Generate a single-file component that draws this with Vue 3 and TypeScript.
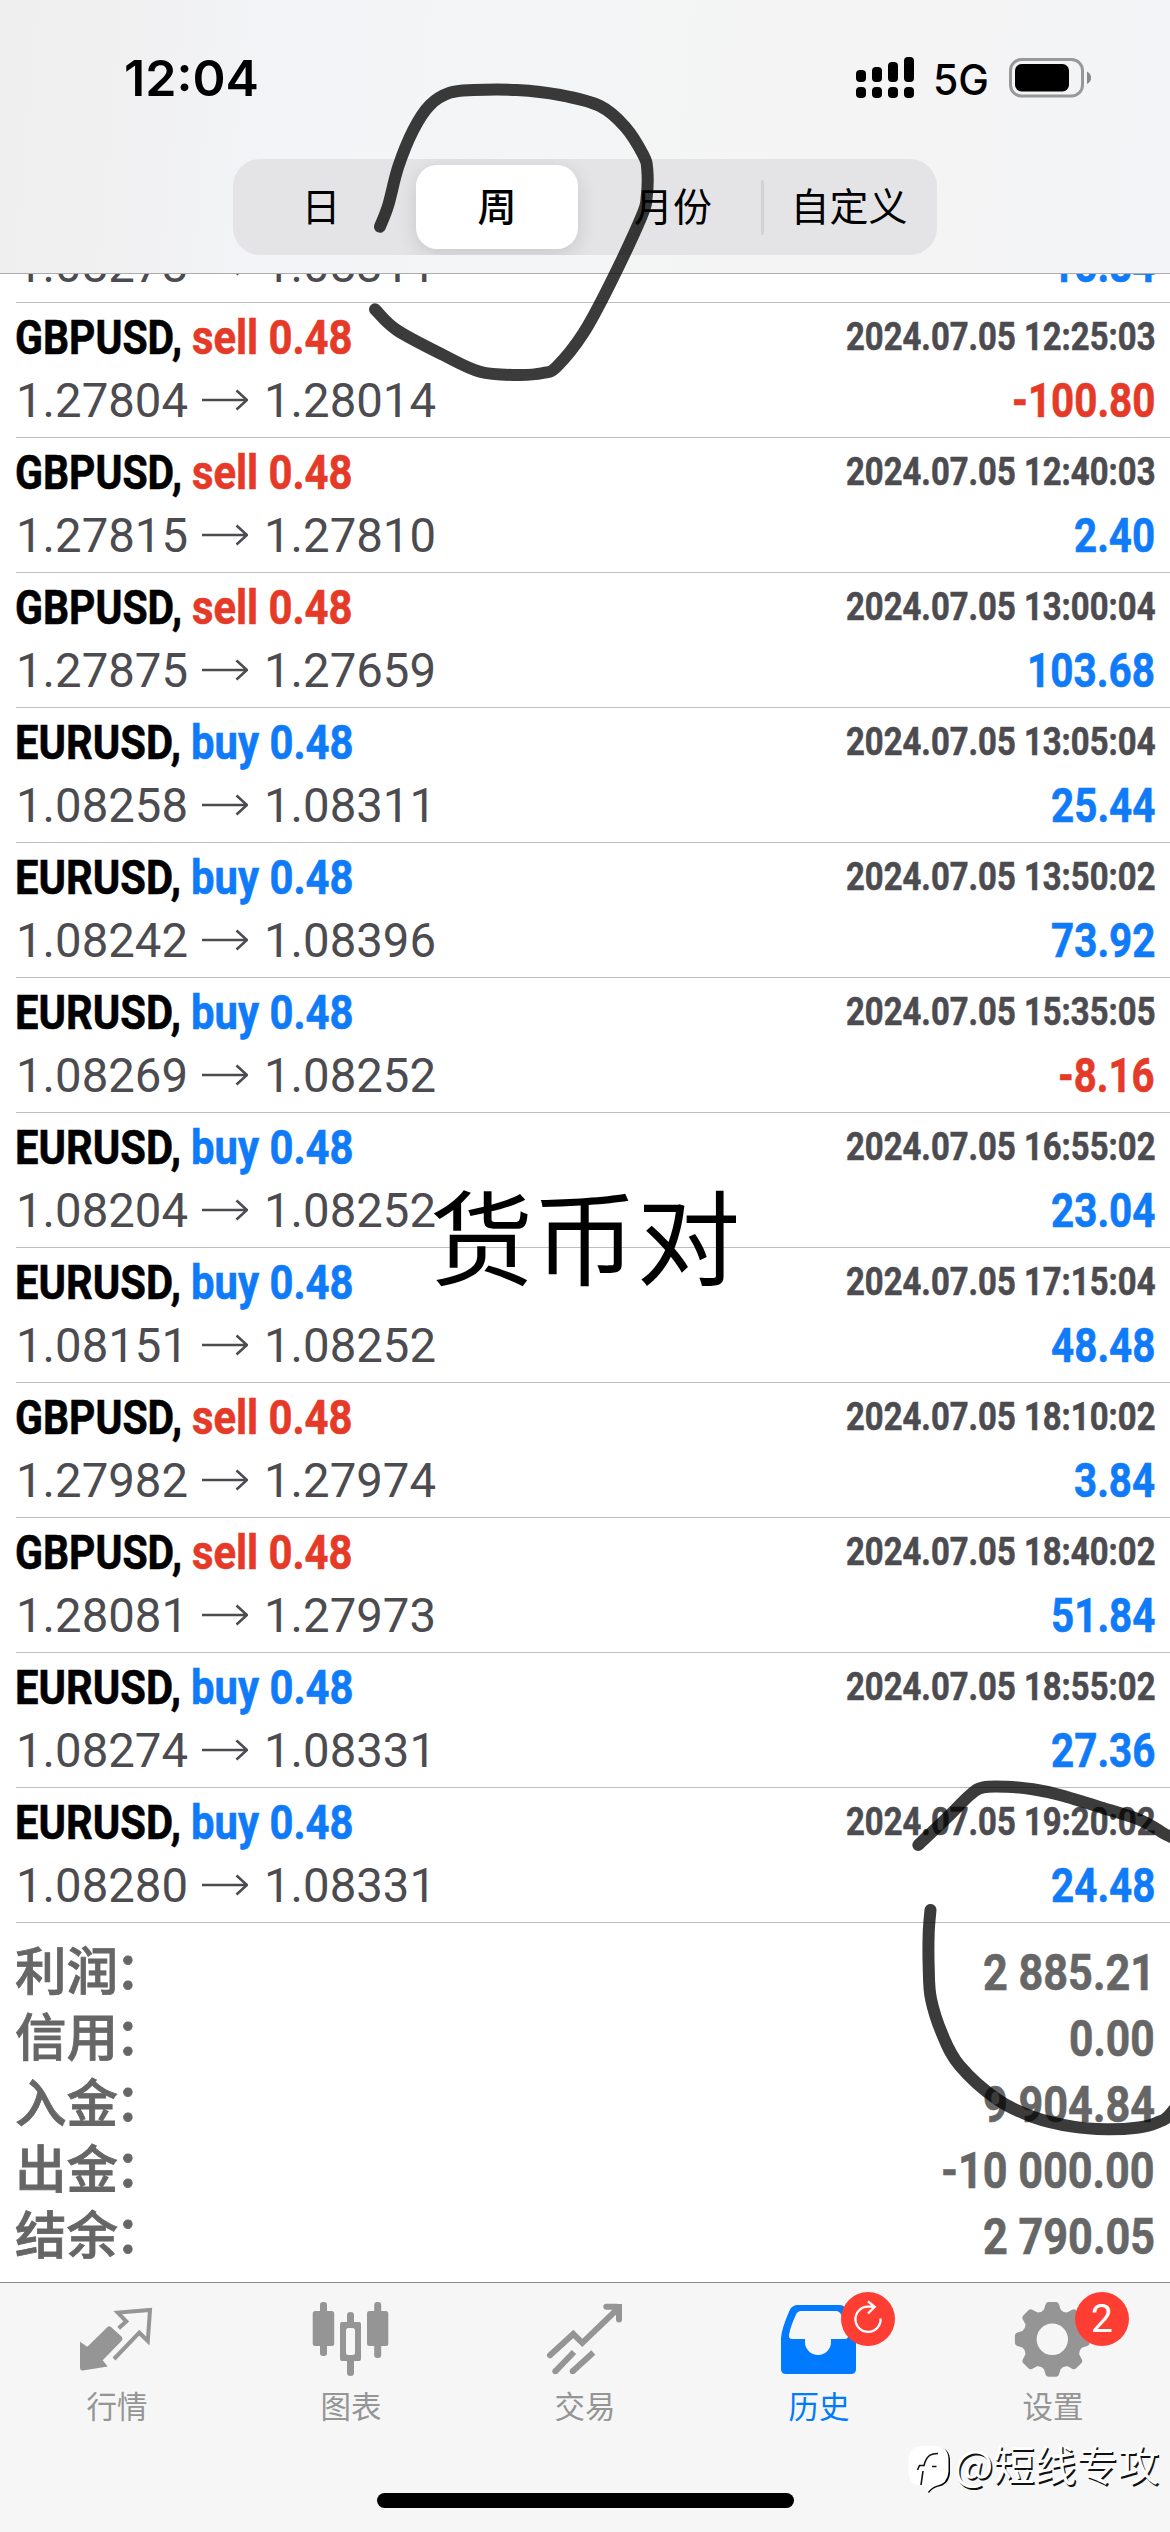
<script setup lang="ts">
import { h, type FunctionalComponent } from 'vue'

interface FitProps {
  text: string
  len: number
  size: number
  base: number
  height?: number
}

// Single line of text squeezed to an exact advance width (condensed lettering).
const FitText: FunctionalComponent<FitProps> = (p) =>
  h('svg', { width: p.len, height: p.height ?? 67, style: 'display:block;overflow:visible;flex:none' }, [
    h(
      'text',
      {
        x: 0,
        y: p.base,
        'font-size': p.size,
        textLength: p.len,
        lengthAdjust: 'spacingAndGlyphs',
        fill: 'currentColor',
      },
      p.text,
    ),
  ])
FitText.props = ['text', 'len', 'size', 'base', 'height']

interface Deal {
  symbol: 'GBPUSD' | 'EURUSD'
  side: 'buy' | 'sell'
  open: string
  close: string
  time: string
  profit: string
}

const deal = (symbol: Deal['symbol'], side: Deal['side'], open: string, close: string, time: string, profit: string): Deal => ({
  symbol, side, open, close, time: time && `2024.07.05 ${time}`, profit,
})

// The first deal is scrolled under the header, only its price line peeks out.
const deals: Deal[] = [
  deal('EURUSD', 'buy', '1.08278', '1.08311', '', '15.84'),
  deal('GBPUSD', 'sell', '1.27804', '1.28014', '12:25:03', '-100.80'),
  deal('GBPUSD', 'sell', '1.27815', '1.27810', '12:40:03', '2.40'),
  deal('GBPUSD', 'sell', '1.27875', '1.27659', '13:00:04', '103.68'),
  deal('EURUSD', 'buy', '1.08258', '1.08311', '13:05:04', '25.44'),
  deal('EURUSD', 'buy', '1.08242', '1.08396', '13:50:02', '73.92'),
  deal('EURUSD', 'buy', '1.08269', '1.08252', '15:35:05', '-8.16'),
  deal('EURUSD', 'buy', '1.08204', '1.08252', '16:55:02', '23.04'),
  deal('EURUSD', 'buy', '1.08151', '1.08252', '17:15:04', '48.48'),
  deal('GBPUSD', 'sell', '1.27982', '1.27974', '18:10:02', '3.84'),
  deal('GBPUSD', 'sell', '1.28081', '1.27973', '18:40:02', '51.84'),
  deal('EURUSD', 'buy', '1.08274', '1.08331', '18:55:02', '27.36'),
  deal('EURUSD', 'buy', '1.08280', '1.08331', '19:20:02', '24.48'),
]

const summary = [
  { label: '利润', value: '2 885.21' },
  { label: '信用', value: '0.00' },
  { label: '入金', value: '9 904.84' },
  { label: '出金', value: '-10 000.00' },
  { label: '结余', value: '2 790.05' },
]

const measure = (s: string, digit: number, dot: number, minus: number, space: number) =>
  [...s].reduce((n, c) => n + (c === '.' ? dot : c === '-' ? minus : c === ' ' ? space : digit), 0)

const profitLen = (s: string) => measure(s, 23.4, 10.9, 15.5, 11)
const totalLen = (s: string) => measure(s, 24.6, 11.8, 17, 12.6)

const segments = ['日', '周', '月份', '自定义']
const tabs = [
  { id: 'quotes', label: '行情' },
  { id: 'chart', label: '图表' },
  { id: 'trade', label: '交易' },
  { id: 'history', label: '历史' },
  { id: 'settings', label: '设置' },
]

const gear = (() => {
  const cx = 116.3
  const cy = 56.3
  const pt = (r: number, deg: number) => {
    const a = (deg * Math.PI) / 180
    return `${(cx + r * Math.cos(a)).toFixed(2)} ${(cy + r * Math.sin(a)).toFixed(2)}`
  }
  let d = ''
  for (let i = 0; i < 8; i++) {
    const a = i * 45
    d += `${i ? 'L' : 'M'}${pt(31, a - 15.5)}L${pt(35.5, a - 11)}Q${pt(37.6, a - 9.5)} ${pt(37.6, a - 6)}`
    d += `L${pt(37.6, a + 6)}Q${pt(37.6, a + 9.5)} ${pt(35.5, a + 11)}L${pt(31, a + 15.5)}Q${pt(28.6, a + 22.5)} ${pt(31, a + 29.5)}`
  }
  return d + `Z M${cx - 15.7} ${cy}a15.7 15.7 0 1 0 31.4 0a15.7 15.7 0 1 0 -31.4 0Z`
})()

// Smooth curve through the pen points (Catmull-Rom to Bezier).
function pen(pts: number[][]): string {
  let d = `M${pts[0][0]} ${pts[0][1]}`
  for (let i = 0; i < pts.length - 1; i++) {
    const p0 = pts[Math.max(i - 1, 0)]
    const p1 = pts[i]
    const p2 = pts[i + 1]
    const p3 = pts[Math.min(i + 2, pts.length - 1)]
    d += `C${p1[0] + (p2[0] - p0[0]) / 6} ${p1[1] + (p2[1] - p0[1]) / 6} ${p2[0] - (p3[0] - p1[0]) / 6} ${p2[1] - (p3[1] - p1[1]) / 6} ${p2[0]} ${p2[1]}`
  }
  return d
}

const topLoop = pen([
  [380, 226.7], [388.3, 205], [398.3, 166.7], [413.3, 130], [430, 105], [450, 92.7], [473.3, 90], [516.7, 90],
  [560, 95], [600, 106], [625, 126.7], [643.3, 155], [647.3, 170], [646.7, 196.7], [641.5, 216.7], [610, 284],
  [583.3, 333.3], [556.7, 366.7], [543, 373], [516.7, 375], [480, 371.7], [443.3, 355], [396.7, 330], [375, 309.3],
])
const bottomLoop = pen([
  [918.3, 1845], [946.7, 1818], [970, 1795], [983.3, 1787.3], [1006.7, 1786.7], [1033, 1789.3], [1060, 1795],
  [1103, 1808], [1140, 1820], [1163, 1833], [1185, 1848], [1215, 1900], [1225, 1980], [1200, 2070], [1172, 2112],
  [1156.7, 2122.7], [1136.7, 2127.7], [1106.7, 2129.3], [1073, 2126.7], [1033, 2117], [996.7, 2099], [960, 2066],
  [943, 2036], [931, 1999], [928.7, 1967], [928.7, 1933], [930.5, 1910],
])
</script>

<template>
  <div class="screen">
    <header class="top">
      <div class="status">
        <FitText class="clock" text="12:04" :len="135" :size="49.5" :base="96" :height="120" />
        <div class="status-right">
          <svg class="signal" width="58" height="42" viewBox="0 0 58 42">
            <rect x="0" y="13" width="10" height="12" rx="4" />
            <rect x="16" y="10" width="10" height="15" rx="4" />
            <rect x="32" y="5" width="10" height="20" rx="4" />
            <rect x="48" y="0" width="10" height="25" rx="4" />
            <rect v-for="n in 4" :key="n" :x="(n - 1) * 16" y="30" width="10" height="11" rx="4" />
          </svg>
          <FitText class="net" text="5G" :len="56" :size="42" :base="94.5" :height="120" />
          <svg class="battery" width="84" height="40" viewBox="0 0 84 40">
            <rect x="1.5" y="1.5" width="72" height="36.5" rx="11" fill="none" stroke="#98989a" stroke-width="3" />
            <rect x="6" y="6" width="54" height="27.5" rx="6.5" />
            <path d="M78 13.5Q82 15.5 82 19.8T78 26Z" fill="#88888a" />
          </svg>
        </div>
      </div>
      <nav class="segmented">
        <div v-for="(s, i) in segments" :key="s" class="segment" :class="{ active: i === 1, split: i === 3 }">
          <span>{{ s }}</span>
        </div>
      </nav>
    </header>

    <main class="history">
      <section class="deals">
        <article v-for="(d, i) in deals" :key="i" class="deal">
          <div class="line">
            <template v-if="d.time">
              <div class="title">
                <FitText class="symbol" :class="d.symbol" :text="d.symbol + ','" :len="d.symbol === 'GBPUSD' ? 167 : 166" :size="48" :base="50.5" />
                <FitText class="side" :class="d.side" :text="`${d.side} 0.48`" :len="d.side === 'sell' ? 160.5 : 162.5" :size="48" :base="50.5" />
              </div>
              <FitText class="time" :text="d.time" :len="309.5" :size="39" :base="47" />
            </template>
          </div>
          <div class="line">
            <div class="prices">
              <FitText :text="d.open" :len="172" :size="48" :base="47" />
              <svg class="arrow" width="46" height="67" viewBox="0 0 46 67">
                <path d="M0 30H44.5M34.5 20.5L45 30L34.5 39.5" />
              </svg>
              <FitText :text="d.close" :len="172" :size="48" :base="47" />
            </div>
            <FitText class="profit" :class="{ loss: d.profit.startsWith('-') }" :text="d.profit" :len="profitLen(d.profit)" :size="48" :base="47" />
          </div>
        </article>
      </section>
      <section class="summary">
        <div v-for="s in summary" :key="s.label" class="total">
          <span class="total-label">{{ s.label }}<i>：</i></span>
          <FitText class="total-value" :text="s.value" :len="totalLen(s.value)" :size="50" :base="47" :height="66" />
        </div>
      </section>
    </main>

    <footer class="tabbar">
      <div class="tabs">
        <div v-for="t in tabs" :key="t.id" class="tab" :class="{ current: t.id === 'history' }">
          <svg width="234" height="102" viewBox="0 0 234 102">
            <g v-if="t.id === 'quotes'">
              <path d="M80 58.7L87.3 63.7L107.5 44Q109.3 42.3 111 44L121.7 53.8Q123.3 56 121.7 57.8L102.7 77.3L107.7 83.5L83 87.5Q80 87.8 80 85Z" fill="currentColor" />
              <path d="M118.7 45.3L126.3 38.3L117.8 29.6L150 27L147.8 58L139.3 49.7L114 76" fill="none" stroke="currentColor" stroke-width="4" />
            </g>
            <g v-else-if="t.id === 'chart'" fill="currentColor">
              <rect x="78.7" y="28" width="21.5" height="35" rx="2.5" />
              <rect x="86" y="19" width="7" height="54" rx="3" />
              <rect x="133" y="28" width="21.3" height="35" rx="2.5" />
              <rect x="140.2" y="19" width="7" height="56" rx="3" />
              <path d="M113 41V32Q113 29 116.500 29T120 32V41ZM113 76V90Q113 93 116.500 93T120 90V76Z" />
              <path fill-rule="evenodd" d="M108 39H125Q127 39 127 41V76Q127 78 125 78H108Q106 78 106 76V41Q106 39 108 39ZM114.500 45Q112 45 112 47.500V69.500Q112 72 114.500 72H118.500Q121 72 121 69.500V47.500Q121 45 118.500 45Z" />
            </g>
            <g v-else-if="t.id === 'trade'" fill="none" stroke="currentColor" stroke-width="6">
              <path stroke-linecap="round" d="M82 72.300L105.300 51L114.300 59.800L149 26.500M138.300 23.800H148.500" />
              <path stroke-linecap="round" d="M151 26V36.500" />
              <path d="M146 21H154V29L149 31Z" fill="currentColor" stroke="none" />
              <path d="M87.300 88.300L106 69M104.700 88.300L125.300 69.500" />
              <g fill="currentColor" stroke="none"><circle cx="87.300" cy="88.200" r="3" /><circle cx="104.700" cy="88.200" r="3" /></g>
            </g>
            <g v-else-if="t.id === 'history'">
              <path fill="currentColor" fill-rule="evenodd" d="M79 55Q79.500 46 87.500 27.500Q90 22 96 22H137Q143 22 145.500 27.500Q153.500 46 154 55V86Q154 91 149 91H84Q79 91 79 86ZM99 28Q95.500 28 94 31.500C90.500 39 88 46 87 52Q86.500 56 90 56H103V59A13 13 0 0 0 129 59V56H143Q146.500 56 146 52C145 46 142.500 39 139 31.500Q137.500 28 134 28Z" />
              <circle cx="166" cy="36" r="27" fill="#ff3e33" />
              <path d="M178.600 35.500A12.600 12.600 0 1 1 166 23.700H172M166 18.300L172.700 23.800L166 30.500" fill="none" stroke="#fff" stroke-width="2.300" />
            </g>
            <g v-else>
              <path :d="gear" fill="currentColor" fill-rule="evenodd" />
              <circle cx="166" cy="36" r="27" fill="#ff3e33" />
              <text class="count" x="166" y="49.300" text-anchor="middle">2</text>
            </g>
          </svg>
          <span class="tab-label">{{ t.label }}</span>
        </div>
      </div>
      <div class="home"></div>
    </footer>

    <div class="caption">货币对</div>

    <svg class="ink" width="1170" height="2532" viewBox="0 0 1170 2532">
      <path :d="topLoop" />
      <path :d="bottomLoop" />
    </svg>

    <div class="mark">
      <svg width="49" height="60" viewBox="0 0 49 60">
        <path d="M21 7H35Q49 7 49 21V33Q48 45 36 47Q31 48.500 28 53L27 52L30 46H20Z" fill="#000" />
        <path d="M21 6H34Q47.500 6 47.500 20V32Q46.500 44 35 46Q31 47 27.500 51.500L25 46H21Q7.500 45 7.500 32V20Q8 6 21 6Z" fill="#fff" />
        <path d="M16.500 30L18.500 25.500H23C25 17.500 28 13.500 37 13.500M22 31L20 45M31 26.500H35.500" fill="none" stroke="#111" stroke-width="1.600" />
      </svg>
      <span>@短线专攻</span>
    </div>
  </div>
</template>

<style>
body {
  margin: 0;
  background: #fff;
}
</style>

<style scoped>
.screen {
  position: relative;
  width: 1170px;
  height: 2532px;
  overflow: hidden;
  background: #fff;
  color: #000;
  font-family: Roboto, "Noto Sans CJK SC", sans-serif;
  display: flex;
  flex-direction: column;
}
.top {
  box-sizing: border-box;
  height: 274px;
  flex: none;
  border-bottom: 1px solid #acacae;
  background: linear-gradient(95deg, #efefef 0%, #f0f0f1 10%, #f3f4f7 24%, #f4f5f6 45%, #f4f4f4 75%, #f3f4f7 100%);
}
.status {
  height: 159px;
  display: flex;
  justify-content: space-between;
  align-items: flex-start;
  padding: 0 77px 0 123.5px;
  font-family: Inter, sans-serif;
}
.clock {
  font-weight: 600;
}
.status-right {
  display: flex;
  align-items: flex-start;
}
.signal {
  margin: 57px 19px 0 0;
}
.net {
  font-weight: 500;
}
.battery {
  margin: 58px 0 0 20px;
}
.segmented {
  width: 704px;
  height: 96px;
  margin: 0 auto;
  display: flex;
  border-radius: 27px;
  background: #e4e4e6;
  overflow: hidden;
}
.segment {
  position: relative;
  width: 176px;
  display: flex;
  align-items: center;
  justify-content: center;
  font-family: "Noto Sans CJK SC", sans-serif;
  font-size: 39px;
  line-height: 1;
}
.segment span {
  box-sizing: border-box;
  width: 162px;
  height: 84px;
  padding-top: 20px;
  text-align: center;
}
.segment.active span {
  border-radius: 21px;
  background: #fff;
  font-weight: 500;
  box-shadow: 0 5px 20px rgba(0, 0, 0, 0.13);
}
.segment.split::before {
  content: "";
  position: absolute;
  left: 0;
  top: 21px;
  width: 3px;
  height: 55px;
  border-radius: 2px;
  background: #d2d2d5;
}
.history {
  height: 2008px;
  flex: none;
  overflow: hidden;
}
.deals {
  margin: -106px 0 0 16px;
}
.deal {
  height: 134px;
  border-bottom: 1px solid #bebec0;
  padding-right: 15px;
}
.line {
  display: flex;
  justify-content: space-between;
  height: 67px;
}
.line > :last-child {
  margin-left: auto;
}
.line > .prices {
  margin-left: 0;
}
.title,
.prices {
  display: flex;
}
.title,
.time,
.profit,
.total-value {
  font-weight: 700;
  stroke: currentColor;
  stroke-width: 0.6px;
}
.symbol {
  margin-left: -1px;
  margin-right: 10px;
}
.symbol.EURUSD {
  margin-left: -1.5px;
  margin-right: 10.5px;
}
.sell {
  color: #e53a28;
}
.buy,
.profit {
  color: #0f7bf8;
}
.time {
  color: #4c4b50;
}
.prices {
  color: #4c4b50;
}
.arrow {
  margin: 0 16px 0 14px;
  fill: none;
  stroke: #4c4b50;
  stroke-width: 2.6;
}
.profit.loss {
  color: #e53a28;
}
.summary {
  padding: 20px 15px 0 15px;
}
.total {
  display: flex;
  justify-content: space-between;
  height: 66px;
  color: #666;
}
.total-label {
  height: 66px;
  margin-top: -4px;
  font-family: "Noto Sans CJK SC", sans-serif;
  font-size: 51.5px;
  line-height: 58px;
  font-weight: 500;
  -webkit-text-stroke: 0.8px #666;
}
.total-label i {
  position: relative;
  left: -3px;
  top: -1px;
  font-style: normal;
}
.tabbar {
  box-sizing: border-box;
  height: 250px;
  flex: none;
  border-top: 1px solid #8b8b8d;
  background: #f6f6f6;
}
.tabs {
  display: flex;
  height: 210px;
}
.tab {
  width: 234px;
  display: flex;
  flex-direction: column;
  align-items: center;
  color: #959595;
}
.tab.current {
  color: #007aff;
}
.tab-label {
  font-family: "Noto Sans CJK SC", sans-serif;
  font-size: 30.5px;
  line-height: 40px;
}
.count {
  font-size: 39px;
  fill: #fff;
}
.home {
  width: 417px;
  height: 15px;
  margin: 0 auto;
  border-radius: 8px;
  background: #000;
}
.caption {
  position: absolute;
  top: 1173px;
  left: 0;
  width: 1170px;
  text-align: center;
  font-family: "Noto Sans CJK SC", sans-serif;
  font-size: 103.5px;
  line-height: 120px;
}
.ink {
  position: absolute;
  top: 0;
  left: 0;
  fill: none;
  stroke: rgba(0, 0, 0, 0.77);
  stroke-width: 12;
  stroke-linecap: round;
  stroke-linejoin: round;
}
.mark {
  position: absolute;
  left: 901px;
  top: 2440px;
  display: flex;
  align-items: flex-start;
  gap: 4px;
  font-family: "Noto Sans CJK SC", sans-serif;
  font-size: 41.5px;
  line-height: 46px;
  color: #fff;
  text-shadow: 1.5px 1.5px 0 #111;
  white-space: nowrap;
}
</style>
